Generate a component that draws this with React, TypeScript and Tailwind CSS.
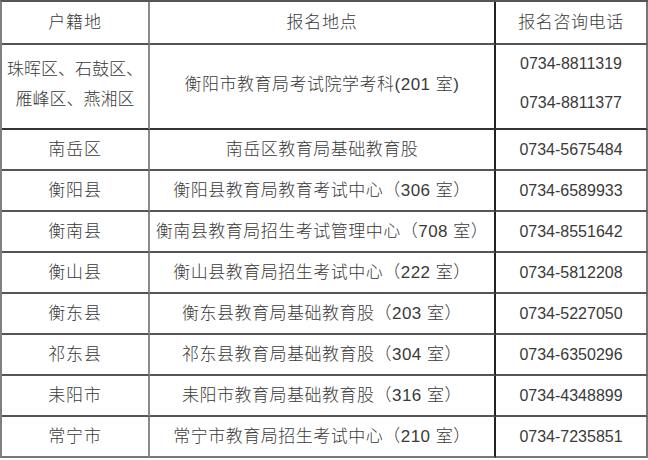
const rows = [
  { area: '南岳区', place: '南岳区教育局基础教育股', phone: '0734-5675484' },
  { area: '衡阳县', place: '衡阳县教育局教育考试中心（306 室）', phone: '0734-6589933' },
  { area: '衡南县', place: '衡南县教育局招生考试管理中心（708 室）', phone: '0734-8551642' },
  { area: '衡山县', place: '衡山县教育局招生考试中心（222 室）', phone: '0734-5812208' },
  { area: '衡东县', place: '衡东县教育局基础教育股（203 室）', phone: '0734-5227050' },
  { area: '祁东县', place: '祁东县教育局基础教育股（304 室）', phone: '0734-6350296' },
  { area: '耒阳市', place: '耒阳市教育局基础教育股（316 室）', phone: '0734-4348899' },
  { area: '常宁市', place: '常宁市教育局招生考试中心（210 室）', phone: '0734-7235851' },
];

const font = { fontFamily: '"Liberation Sans", "Noto Sans CJK SC", sans-serif' };

export default function App() {
  return (
    <div className="w-[648px] h-[460px] bg-white text-[#3a3a3a] font-light" style={font}>
      <div className="w-[648px] border-l-2 border-t-2 border-l-[#808080] border-t-[#555]">
        {/* Header */}
        <div className="flex h-[43px]">
          <div className="w-[148px] flex items-center justify-center border-r-2 border-b-2 border-r-[#8a8a8a] border-b-[#555] text-[17px] tracking-[0.8px]">
            户籍地
          </div>
          <div className="w-[346px] flex items-center justify-center border-r-2 border-b-2 border-r-[#222] border-b-[#555] text-[17px] tracking-[0.8px]">
            报名地点
          </div>
          <div className="w-[152px] flex items-center justify-center border-r-2 border-b-2 border-r-[#777] border-b-[#555] text-[17px] tracking-[0.6px]">
            报名咨询电话
          </div>
        </div>

        {/* First row, two lines */}
        <div className="flex h-[85px]">
          <div className="w-[148px] flex flex-col items-center justify-center border-r-2 border-b-2 border-r-[#8a8a8a] border-b-[#333] text-[17px] leading-[30px] pb-[4px]">
            <span>珠晖区、石鼓区、</span>
            <span>雁峰区、燕湘区</span>
          </div>
          <div className="w-[346px] flex items-center justify-center border-r-2 border-b-2 border-r-[#222] border-b-[#333] text-[17px] tracking-[0.5px] pb-[4px]">
            衡阳市教育局考试院学考科(201 室)
          </div>
          <div className="w-[152px] flex flex-col justify-center border-r-2 border-b-2 border-r-[#777] border-b-[#333] text-[16px] pb-[6px]">
            <span className="h-[41px] flex items-center justify-center">0734-8811319</span>
            <span className="h-[41px] flex items-center justify-center">0734-8811377</span>
          </div>
        </div>

        {rows.map((r, i) => (
          <div key={r.area} className="flex h-[41px]">
            <div
              className={`w-[148px] flex items-center justify-center border-r-2 border-b-2 border-r-[#8a8a8a] text-[17px] tracking-[0.8px] ${
                i === rows.length - 1 ? 'border-b-[#777]' : 'border-b-[#555]'
              }`}
            >
              {r.area}
            </div>
            <div
              className={`w-[346px] flex items-center justify-center border-r-2 border-b-2 border-r-[#222] text-[17px] tracking-[0.5px] ${
                i === rows.length - 1 ? 'border-b-[#777]' : 'border-b-[#555]'
              }`}
            >
              {r.place}
            </div>
            <div
              className={`w-[152px] flex items-center justify-center border-r-2 border-b-2 border-r-[#777] text-[16px] ${
                i === rows.length - 1 ? 'border-b-[#777]' : 'border-b-[#555]'
              }`}
            >
              {r.phone}
            </div>
          </div>
        ))}
      </div>
    </div>
  );
}
